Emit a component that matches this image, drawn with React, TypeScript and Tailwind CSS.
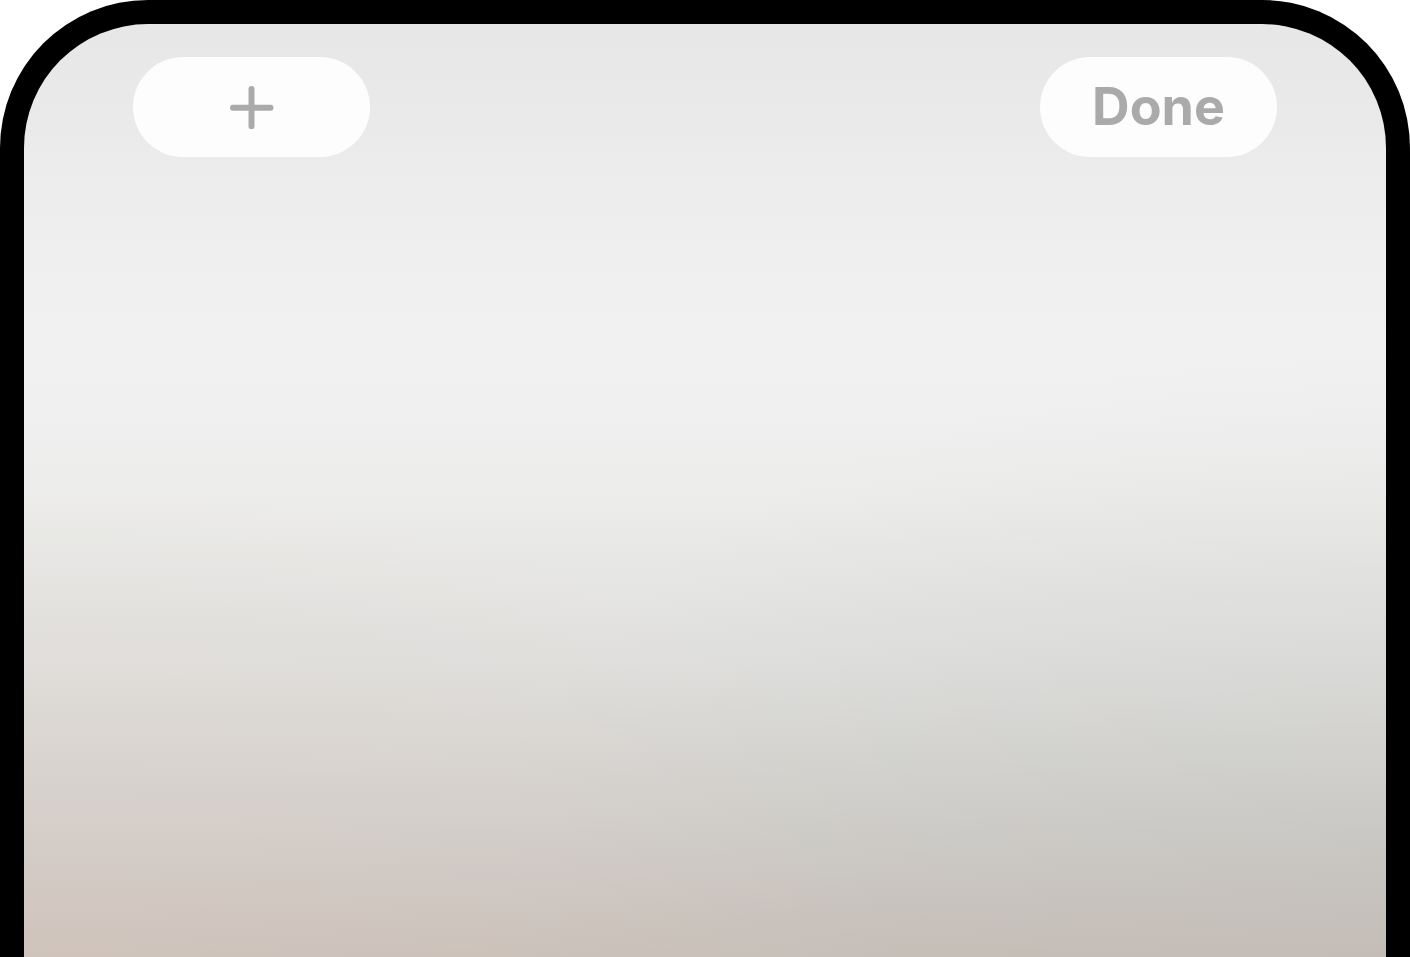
export default function App() {
  return (
    <main className="h-screen overflow-hidden bg-white font-[Inter,'Liberation_Sans',sans-serif]">
      <div className="h-full rounded-t-[148px] bg-black px-6 pt-6">
        <section className="h-full overflow-hidden rounded-t-[124px] bg-[radial-gradient(ellipse_60%_44%_at_4%_94%,#e4cec448,#e4cec420_60%,transparent),radial-gradient(ellipse_65%_55%_at_100%_90%,#a8aca828,#a8aca814_55%,transparent),linear-gradient(to_bottom,#e7e7e7_0%,#eaeaea_11%,#efefef_24%,#f1f1f1_34%,#f0f0f0_42%,#ececeb_51%,#e6e6e4_59%,#dfdfdd_69%,#d7d6d3_78%,#cfccc8_88%,#cac3bd_96%,#c8c0b9_100%)]">
          <header className="flex items-center justify-between px-[109px] pt-[33px]">
            <button type="button" aria-label="Add" className="flex h-[100px] w-[237px] items-center justify-center rounded-full bg-[#fdfdfd] text-[#aaaaaa]">
              <svg viewBox="0 0 44 44" className="size-11" fill="none" stroke="currentColor" strokeWidth="6" strokeLinecap="round" aria-hidden="true">
                <path d="M21.5 4v37.3M3 22.8h37.5" />
              </svg>
            </button>
            <button type="button" className="h-[100px] w-[237px] rounded-full bg-[#fdfdfd] text-[52px] leading-none font-bold text-[#aaaaaa]">
              Done
            </button>
          </header>
        </section>
      </div>
    </main>
  );
}
